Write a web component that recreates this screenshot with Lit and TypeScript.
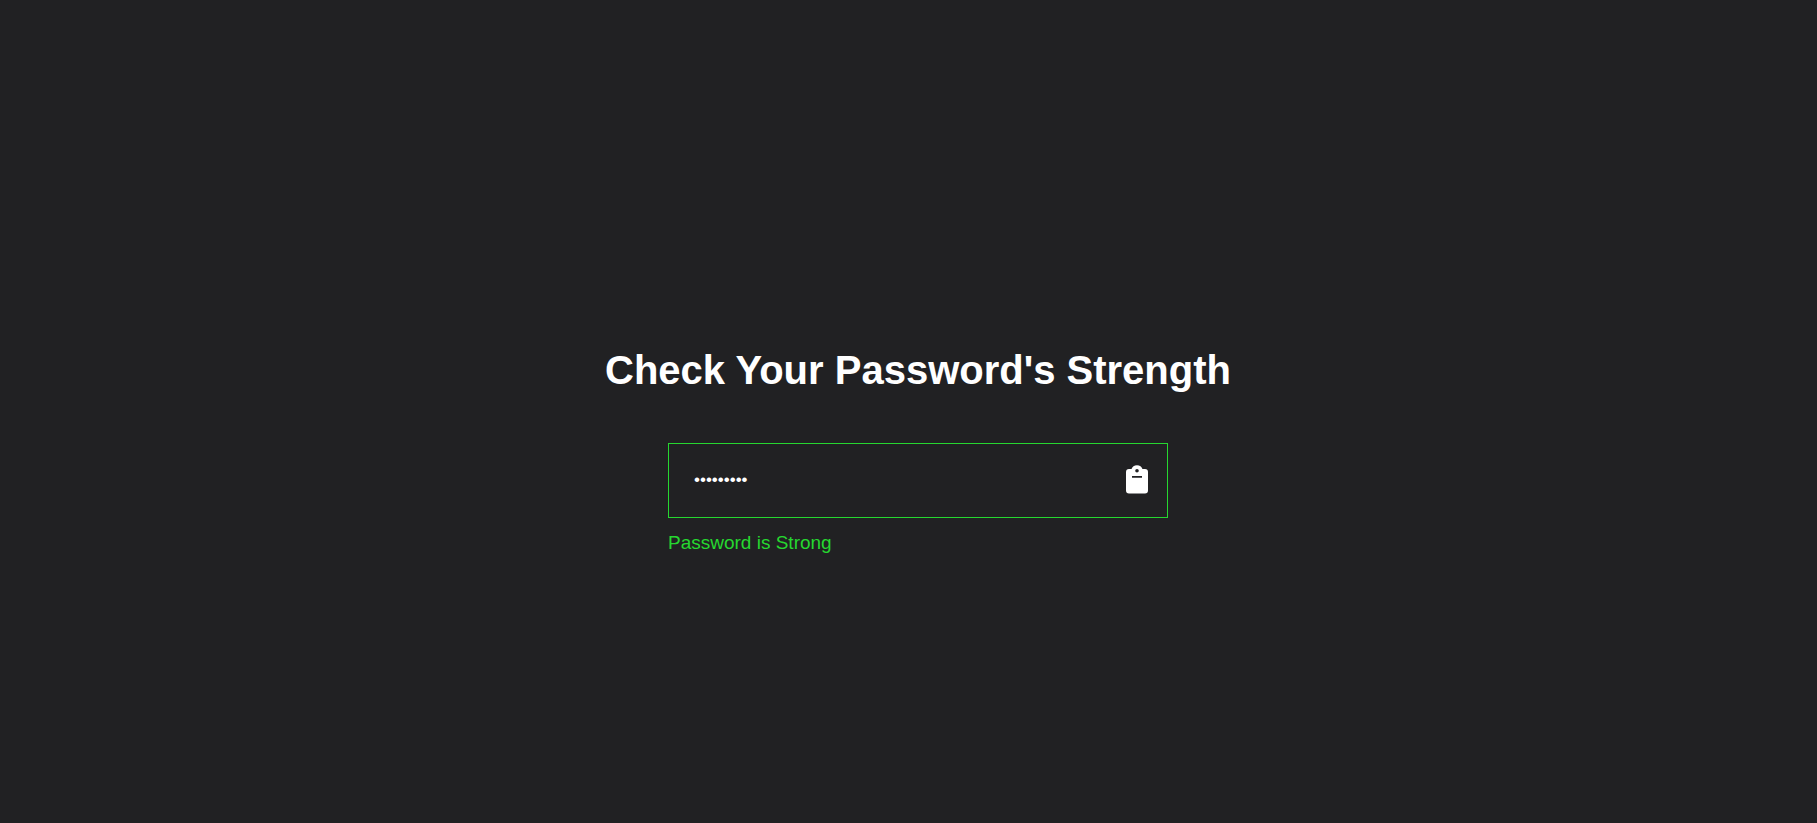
import { LitElement, html, css } from "lit";
import { customElement, state } from "lit/decorators.js";

@customElement("app-root")
export class AppRoot extends LitElement {
  static styles = css`
    :host {
      display: flex;
      box-sizing: border-box;
      min-height: 100vh;
      padding: 78px 0 0 19px;
      align-items: center;
      justify-content: center;
      background: #212123;
      color: #fff;
      font-family: Arial, "Liberation Sans", sans-serif;
    }
    .container {
      display: flex;
      flex-direction: column;
      align-items: center;
      gap: 49px;
    }
    h1 {
      margin: 0;
      font-size: 40px;
      line-height: 48px;
      font-weight: 700;
      text-align: center;
    }
    .group {
      width: 500px;
      max-width: 100%;
    }
    .box {
      display: flex;
      align-items: center;
      box-sizing: border-box;
      height: 75px;
      padding: 0 19px 2px 25px;
      border: 1px solid #26d730;
    }
    input {
      flex: 1;
      min-width: 0;
      padding: 0;
      border: 0;
      outline: 0;
      background: transparent;
      color: #fff;
      font: 17px/24px Arial, "Liberation Sans", sans-serif;
    }
    button {
      display: flex;
      padding: 0;
      border: 0;
      background: transparent;
      color: #fff;
      cursor: pointer;
    }
    p {
      margin: 13px 0 0;
      font-size: 19px;
      line-height: 24px;
      color: #26d730;
    }
  `;

  @state() private password = "Abc123!@#";

  private get strength() {
    const n = this.password.length;
    return n < 4 ? "Weak" : n < 8 ? "Medium" : "Strong";
  }

  private onInput(e: Event) {
    this.password = (e.target as HTMLInputElement).value;
  }

  private copy() {
    navigator.clipboard?.writeText(this.password);
  }

  render() {
    return html`
      <main class="container">
        <h1>Check Your Password's Strength</h1>
        <div class="group">
          <div class="box">
            <input
              type="password"
              aria-label="Password"
              .value=${this.password}
              @input=${this.onInput}
            />
            <button type="button" aria-label="Copy password" @click=${this.copy}>
              <svg width="22" height="29" viewBox="0 0 22 29" aria-hidden="true">
                <path
                  fill="currentColor"
                  fill-rule="evenodd"
                  d="M3 4H5.500C6.300 1.700 8.200 0.200 11 0.200S15.700 1.700 16.500 4H19A3 3 0 0 1 22 7V25.500A3 3 0 0 1 19 28.500H3A3 3 0 0 1 0 25.500V7A3 3 0 0 1 3 4ZM11 4A1.800 1.800 0 1 0 11 7.600A1.800 1.800 0 1 0 11 4ZM6 11V12.800H16V11Z"
                />
              </svg>
            </button>
          </div>
          <p>Password is ${this.strength}</p>
        </div>
      </main>
    `;
  }
}
